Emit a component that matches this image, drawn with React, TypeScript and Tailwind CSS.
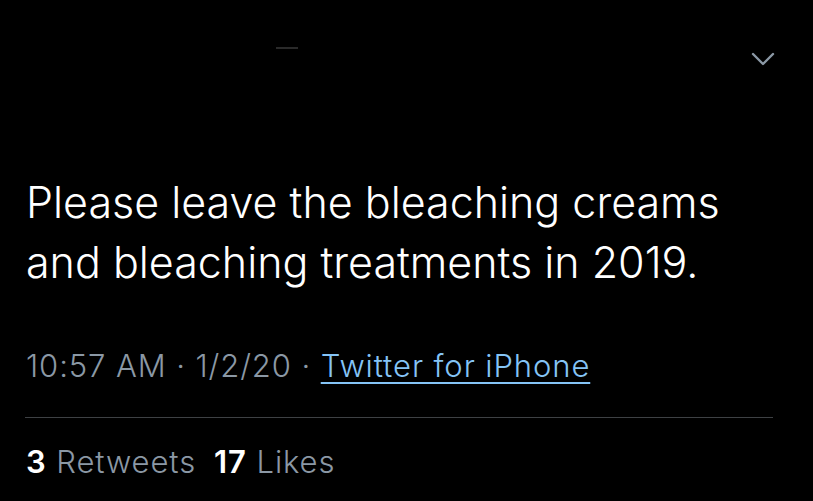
import React from 'react';

function Chevron() {
  return (
    <svg width="24" height="16" viewBox="0 0 24 16" fill="none" className="text-[#8b98a5]">
      <path d="M2 3l10 10 10-10" stroke="currentColor" strokeWidth="2.4" strokeLinecap="round" strokeLinejoin="round" />
    </svg>
  );
}

export default function App() {
  return (
    <div
      className="w-[813px] h-[501px] bg-black overflow-hidden relative"
      style={{ fontFamily: 'Inter, "Noto Sans", sans-serif' }}
    >
      <div className="absolute left-[276px] top-[47px] w-[22px] h-[2px] bg-[#2a2a2a]" />
      <div className="absolute right-[38px] top-[51px]">
        <Chevron />
      </div>

      <div className="pl-[26px] pr-[40px] pt-[172px]">
        <p className="text-white text-[43px] leading-[60px] tracking-[0px] font-light">
          Please leave the bleaching creams and bleaching treatments in 2019.
        </p>

        <div className="mt-[55px] text-[31px] leading-[38px] text-[#8b98a5] tracking-[0.9px] font-light">
          10:57 AM · 1/2/20 ·{' '}
          <span className="text-[#85c4f6] underline underline-offset-[5px] decoration-2">Twitter for iPhone</span>
        </div>
      </div>

      <div className="ml-[25px] mr-[40px] mt-[32px] h-px bg-[#3e4144]" />

      <div className="pl-[26px] pt-[25px] text-[31px] leading-[38px] tracking-[0.9px] flex gap-[18px]">
        <span>
          <span className="text-white font-semibold">3</span>
          <span className="text-[#8b98a5] font-light"> Retweets</span>
        </span>
        <span>
          <span className="text-white font-semibold">17</span>
          <span className="text-[#8b98a5] font-light"> Likes</span>
        </span>
      </div>
    </div>
  );
}
